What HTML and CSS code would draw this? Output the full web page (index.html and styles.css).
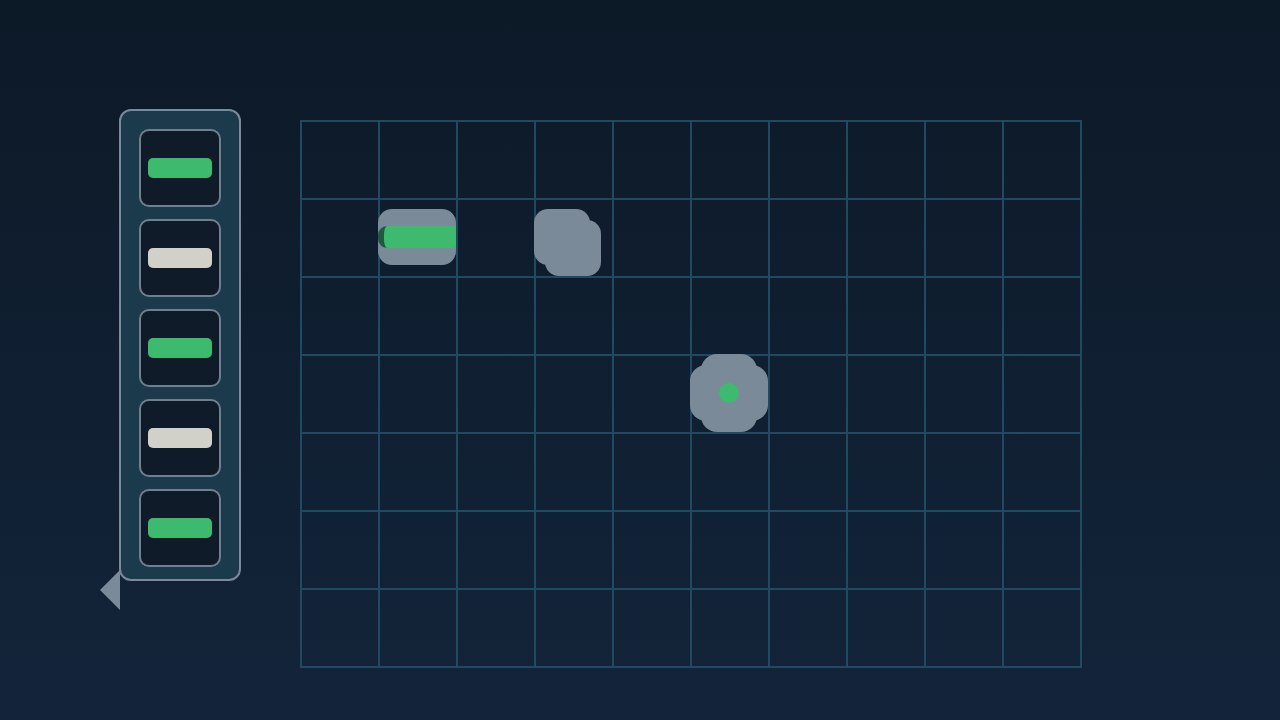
FILE: index.html
```html
<!DOCTYPE html>
<html lang="en">
<head>
    <meta charset="UTF-8">
    <meta name="viewport" content="width=device-width, initial-scale=1.0">
    <title>Puzzle Board</title>
    <link rel="stylesheet" href="styles.css">
</head>
<body>
    <div class="stage">
        <aside class="tray">
            <div class="slot"><span class="bar green"></span></div>
            <div class="slot"><span class="bar white"></span></div>
            <div class="slot"><span class="bar green"></span></div>
            <div class="slot"><span class="bar white"></span></div>
            <div class="slot"><span class="bar green"></span></div>
            <span class="tray-arrow"></span>
        </aside>

        <section class="board">
            <div class="cell piece-pipe" style="grid-column: 2; grid-row: 2;">
                <span class="pipe"></span>
            </div>
            <div class="cell" style="grid-column: 4; grid-row: 2;">
                <svg class="piece" width="78" height="78" viewBox="0 0 78 78">
                    <rect x="0" y="11" width="56" height="56" rx="14"/>
                    <rect x="11" y="22" width="56" height="56" rx="14"/>
                    <rect x="8" y="30" width="20" height="30"/>
                </svg>
            </div>
            <div class="cell" style="grid-column: 6; grid-row: 4;">
                <svg class="piece" width="78" height="78" viewBox="0 0 78 78">
                    <rect x="0" y="11" width="78" height="56" rx="16"/>
                    <rect x="11" y="0" width="56" height="78" rx="16"/>
                    <circle class="dot" cx="39" cy="39" r="10"/>
                </svg>
            </div>
        </section>
    </div>
</body>
</html>
```

FILE: styles.css
```css
/* page */
body {
    margin: 0;
    height: 100vh;
    font-family: "Liberation Sans", Arial, sans-serif;
    background: linear-gradient(to bottom, #0c1927, #13243a);
    overflow: hidden;
}
.stage {
    display: flex;
    align-items: flex-start;
    padding: 109px 0 0 119px;
}

/* piece tray on the left */
.tray {
    position: relative;
    display: flex;
    flex-direction: column;
    gap: 12px;
    width: 82px;
    padding: 18px 18px 12px;
    background-color: #1b3a4c;
    border: 2px solid #7a8a9b;
    border-radius: 12px;
}
.slot {
    display: flex;
    justify-content: center;
    align-items: center;
    height: 74px;
    background-color: #0f1b29;
    border: 2px solid #6f7f90;
    border-radius: 10px;
}
.bar {
    width: 64px;
    height: 20px;
    border-radius: 5px;
}
.bar.green {
    background-color: #3dba6e;
}
.bar.white {
    background-color: #d2d1c9;
}
.tray-arrow {
    position: absolute;
    left: -21px;
    bottom: -31px;
    border-top: 20px solid transparent;
    border-bottom: 20px solid transparent;
    border-right: 20px solid #7a8a9a;
}

/* board, one line every 78px */
.board {
    display: grid;
    grid-template-columns: repeat(10, 78px);
    grid-template-rows: repeat(7, 78px);
    width: 782px;
    height: 548px;
    margin: 11px 0 0 59px;
    background-image:
        linear-gradient(to right, #1f4a5f 2px, transparent 2px),
        linear-gradient(to bottom, #1f4a5f 2px, transparent 2px);
    background-size: 78px 78px;
}
.cell {
    display: flex;
    align-items: flex-start;
}
.piece rect {
    fill: #7b8a99;
}
.piece .dot {
    fill: #3dba6e;
}

/* straight pipe piece */
.piece-pipe {
    align-self: center;
    align-items: center;
    height: 56px;
    background-color: #7b8a99;
    border-radius: 14px;
}
.pipe {
    flex: 1;
    height: 22px;
    background-color: #3dba6e;
    border-left: 6px solid #1e5a42;
    border-radius: 9px 3px 3px 9px;
}
```
